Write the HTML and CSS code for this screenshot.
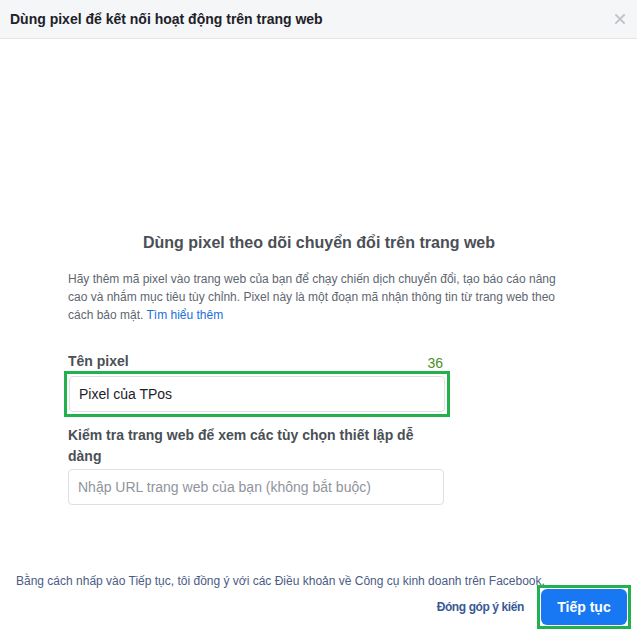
FILE: index.html
```html
<!DOCTYPE html>
<html lang="vi">
<head>
<meta charset="utf-8">
<title>Pixel</title>
<link rel="stylesheet" href="styles.css">
</head>
<body>
<div class="dialog">
  <header class="dlg-head">
    <h1 class="dlg-title">Dùng pixel để kết nối hoạt động trên trang web</h1>
    <button class="close" type="button" aria-label="Đóng">
      <svg width="10" height="10" viewBox="0 0 10 10"><path d="M1 1L9 9M9 1L1 9" stroke="#bec2c9" stroke-width="1.8" stroke-linecap="square"/></svg>
    </button>
  </header>
  <main class="dlg-body">
    <h2 class="headline">Dùng pixel theo dõi chuyển đổi trên trang web</h2>
    <p class="intro">Hãy thêm mã pixel vào trang web của bạn để chạy chiến dịch chuyển đổi, tạo báo cáo nâng cao và nhắm mục tiêu tùy chỉnh. Pixel này là một đoạn mã nhận thông tin từ trang web theo cách bảo mật. <a class="link" href="#">Tìm hiểu thêm</a></p>
    <div class="form">
      <div class="field-head">
        <span class="label">Tên pixel</span>
        <span class="count">36</span>
      </div>
      <div class="hl-box hl-input">
        <input class="input" type="text" value="Pixel của TPos">
      </div>
      <span class="label label-wrap">Kiểm tra trang web để xem các tùy chọn thiết lập dễ dàng</span>
      <input class="input input-url" type="text" placeholder="Nhập URL trang web của bạn (không bắt buộc)">
    </div>
  </main>
  <footer class="dlg-foot">
    <p class="terms">Bằng cách nhấp vào Tiếp tục, tôi đồng ý với các Điều khoản về Công cụ kinh doanh trên Facebook.</p>
    <div class="actions">
      <a class="feedback" href="#">Đóng góp ý kiến</a>
      <span class="hl-box hl-button">
        <button class="primary" type="button">Tiếp tục</button>
      </span>
    </div>
  </footer>
</div>
</body>
</html>
```

FILE: styles.css
```css
* { box-sizing: border-box; }
html, body { margin: 0; padding: 0; background: #fff; }
body { font-family: "Liberation Sans", Arial, sans-serif; color: #1d2129; }

.dialog {
  width: 637px;
  height: 636px;
  display: flex;
  flex-direction: column;
  background: #fff;
}

.dlg-head {
  height: 39px;
  background: #f5f6f7;
  border-bottom: 1px solid #e5e5e5;
  display: flex;
  align-items: center;
  justify-content: space-between;
  padding: 0 12px 0 10px;
}
.dlg-title {
  margin: 0;
  font-size: 14px;
  font-weight: bold;
  line-height: 18px;
  color: #1d2129;
}
.close {
  border: 0;
  background: none;
  padding: 0;
  width: 10px;
  height: 10px;
  display: flex;
}

.dlg-body {
  flex: 1;
  padding: 194px 67px 0 68px;
}
.headline {
  margin: 0;
  text-align: center;
  font-size: 16px;
  line-height: 20px;
  font-weight: bold;
  color: #4b4f56;
}
.intro {
  margin: 17px 0 0;
  font-size: 12px;
  line-height: 18px;
  color: #606770;
}
.link { color: #216fdb; text-decoration: none; }

.form {
  width: 376px;
  margin-top: 25px;
  display: flex;
  flex-direction: column;
}
.field-head {
  display: flex;
  justify-content: space-between;
  align-items: flex-end;
  height: 22px;
}
.label {
  font-size: 14px;
  font-weight: bold;
  line-height: 20px;
  color: #4b4f56;
}
.count {
  font-size: 14px;
  line-height: 16px;
  color: #4b8f29;
  padding-right: 1px;
}
.hl-box {
  border: 3px solid #22b14c;
  display: flex;
}
.hl-input {
  width: 386px;
  margin-left: -4px;
  padding: 2px;
}
.hl-button {
  padding: 1px;
}
.input {
  height: 36px;
  width: 376px;
  border: 1px solid #dddfe2;
  border-radius: 4px;
  padding: 0 9px;
  font-family: "Liberation Sans", Arial, sans-serif;
  font-size: 14px;
  color: #1d2129;
  background: #fff;
}
.input::placeholder { color: #90949c; }
.label-wrap {
  margin-top: 8px;
  width: 360px;
  line-height: 21px;
}
.input-url { margin-top: 2px; }

.dlg-foot {
  padding: 0 6px 7px 16px;
}
.terms {
  margin: 0;
  font-size: 12px;
  line-height: 16px;
  color: #4b5c86;
}
.actions {
  display: flex;
  justify-content: flex-end;
  align-items: center;
  gap: 13px;
  margin-top: -4px;
}
.feedback {
  font-size: 12px;
  font-weight: bold;
  letter-spacing: -0.4px;
  color: #385898;
  text-decoration: none;
}
.primary {
  width: 86px;
  height: 36px;
  border: 0;
  border-radius: 6px;
  background: #1877f2;
  color: #fff;
  font-family: "Liberation Sans", Arial, sans-serif;
  font-size: 14px;
  font-weight: bold;
}
```
